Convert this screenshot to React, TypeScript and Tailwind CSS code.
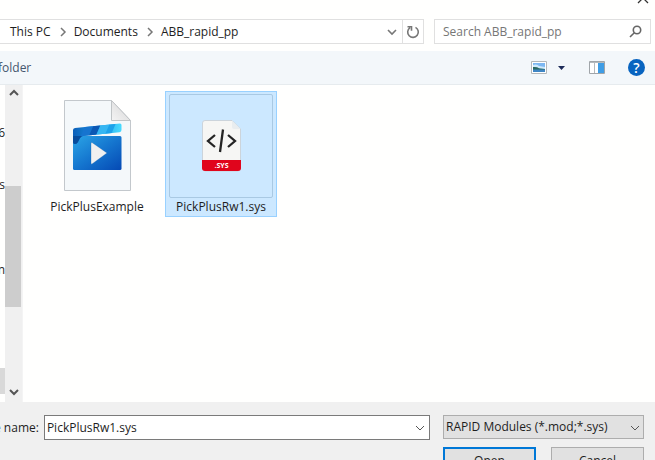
function Chevron({ className }: { className?: string }) {
  return (
    <svg className={className} width="10" height="10" viewBox="0 0 10 10" fill="none" stroke="currentColor" aria-hidden="true">
      <path d="M1 3 5 7 9 3" />
    </svg>
  );
}

function VideoIcon() {
  return (
    <svg width="67" height="92" viewBox="0 0 67 92" aria-hidden="true">
      <defs>
        <linearGradient id="board" x1="0" y1="0" x2="1" y2="1">
          <stop offset="0" stopColor="#2ba5e6" />
          <stop offset="0.5" stopColor="#1576cf" />
          <stop offset="1" stopColor="#0549b4" />
        </linearGradient>
        <linearGradient id="clap" x1="0" y1="0" x2="1" y2="0">
          <stop offset="0" stopColor="#0a5cb6" />
          <stop offset="0.5" stopColor="#1c98e4" />
          <stop offset="1" stopColor="#48dcff" />
        </linearGradient>
        <linearGradient id="fold" x1="0" y1="1" x2="1" y2="0">
          <stop offset="0" stopColor="#f4f4f4" />
          <stop offset="1" stopColor="#d4d4d4" />
        </linearGradient>
        <clipPath id="clapShape">
          <path d="M9 30q0-1.700 2-2l45-4.500q1.500 0 1.500 1.500v5q0 2-2 2.200L19 36q-2 .3-3 2l-2 4q-1 2-3 2-2 0-2-2z" />
        </clipPath>
      </defs>
      <path d="M.5.5h47l19 20v70H.5z" fill="#f4f8fa" stroke="#c3c8cc" />
      <path d="M47.500.5v20h19z" fill="url(#fold)" stroke="#c0c4c6" />
      <path d="M9 38 18 36h38q1.500 0 1.500 1.500v31q0 1.500-1.500 1.500H10.500Q9 70 9 68.500z" fill="url(#board)" />
      <g clipPath="url(#clapShape)">
        <path d="M8 22h50v24H8z" fill="url(#clap)" />
        <path d="M22 24h8l-6 14h-8z" fill="#1674cf" />
        <path d="M30 24h7l-6 14h-7z" fill="#0b58b4" />
        <path d="M37 24h9l-6 14h-9z" fill="#35b6f2" />
        <path d="M46 23h6l-6 14h-6z" fill="#1ca2ea" />
        <path d="M9 36h9l-5 9H9z" fill="#074c9c" />
      </g>
      <path d="M28 42.500 43 53 28 64q-1 .5-1-1v-19.500q0-1.500 1-1z" fill="#f0f0f0" stroke="#0b55a5" strokeOpacity=".4" strokeWidth=".7" />
    </svg>
  );
}

function SysIcon() {
  return (
    <svg width="39" height="52" viewBox="0 0 39 52" aria-hidden="true">
      <path d="M3 .5h27L38.500 9v39q0 3-3 3h-32q-3 0-3-3V3q0-2.500 2.500-2.500z" fill="#f6f6f4" stroke="#c6cdd3" strokeWidth=".8" />
      <path d="M30 .5 38.500 9H32q-2 0-2-2z" fill="#e9edef" />
      <path d="M0 40h39v8q0 3-3 3H3q-3 0-3-3z" fill="#e0051c" />
      <path d="M13 15 6 21l7 6M26 15l7 6-7 6M21 9.500 18 32" fill="none" stroke="#242424" strokeWidth="2.300" />
      <text x="19.500" y="48" textAnchor="middle" fill="#fff" className="text-[7px] font-bold">.SYS</text>
    </svg>
  );
}

function AddressBar() {
  return (
    <div className="flex gap-[10px] pr-1 pb-[7px]">
      <div className="flex h-[25px] min-w-0 flex-1 border border-l-0 border-[#e0e0e0] bg-white">
        <nav className="flex min-w-0 flex-1 items-center" aria-label="Location">
          <Chevron className="-ml-2 mr-2 shrink-0 -rotate-90 stroke-[1.5] text-[#777]" />
          <a href="#pc" className="whitespace-nowrap">This PC</a>
          <Chevron className="mr-[6px] ml-[7px] shrink-0 -rotate-90 stroke-[1.5] text-[#777]" />
          <a href="#documents">Documents</a>
          <Chevron className="mr-[6px] ml-[7px] shrink-0 -rotate-90 stroke-[1.5] text-[#777]" />
          <a href="#rapid">ABB_rapid_pp</a>
        </nav>
        <button className="px-[5px]" aria-label="Previous locations">
          <Chevron className="stroke-[1.6] text-[#777]" />
        </button>
        <button className="border-l border-[#e0e0e0] px-[3px]" aria-label="Refresh">
          <svg width="14" height="14" viewBox="0 0 14 14" fill="none" stroke="#777" strokeWidth="1.6" aria-hidden="true">
            <path d="M9.500 2.400a5.300 5.300 0 1 1-5.500.3M1.500 1.800h4v4" />
          </svg>
        </button>
      </div>
      <div className="flex h-[25px] w-[217px] items-center border border-[#e0e0e0] bg-white pr-2 pl-2">
        <input className="min-w-0 flex-1 outline-none placeholder:text-[#767676]" type="search" aria-label="Search ABB_rapid_pp" placeholder="Search ABB_rapid_pp" />
        <svg width="13" height="13" viewBox="0 0 13 13" fill="none" stroke="#666" strokeWidth="1.600" aria-hidden="true">
          <circle cx="8" cy="5" r="3.700" />
          <path d="M5.300 7.700 1 12" />
        </svg>
      </div>
    </div>
  );
}

function Toolbar() {
  return (
    <div className="flex h-[34px] items-center border-b border-[#e6ebee] bg-[#f3f7fa] pr-[10px] text-[#44566e]">
      <button className="-ml-[2px] mr-auto">folder</button>
      <button className="mr-[11px]" aria-label="Change view">
        <svg width="16" height="13" viewBox="0 0 16 13" aria-hidden="true">
          <path d="M.5.5h15v12H.5z" fill="#fff" stroke="#b4b8ba" />
          <path d="M2 2h12v9H2z" fill="#7db8f2" />
          <path d="M2 4q4-1.500 6 1l6 1v2H2z" fill="#cfeafc" />
          <path d="M2 6q4-.5 6 1.200l6 .8v1H2z" fill="#2b6a62" />
          <path d="M2 8.500h12V11H2z" fill="#3f86c4" />
        </svg>
      </button>
      <button className="mr-6" aria-label="More views">
        <svg width="7" height="4" viewBox="0 0 7 4" aria-hidden="true">
          <path d="M0 0h7L3.500 4z" fill="#1d2b58" />
        </svg>
      </button>
      <button className="mr-[23px]" aria-label="Preview pane">
        <svg width="16" height="13" viewBox="0 0 16 13" aria-hidden="true">
          <path d="M.5.5h15v12H.5z" fill="#fff" stroke="#a0a5a9" />
          <path d="M1 1h14v1H1z" fill="#b5babd" />
          <path d="M5.500 2v10" stroke="#b5babd" />
          <path d="M9 2h6v10H9z" fill="#3f9de5" />
        </svg>
      </button>
      <button className="h-[17px] w-[17px] rounded-full bg-[#0864c0] text-[14px] leading-[17px] font-semibold text-white" aria-label="Help">?</button>
    </div>
  );
}

function Sidebar() {
  return (
    <aside className="flex border-r border-[#f4f4f4]">
      <div className="flex w-[5px] flex-col items-end overflow-hidden pt-[38px] leading-5">
        <span>6</span>
        <span className="mt-8">s</span>
        <span className="mt-[65px]">n</span>
        <span className="mt-auto mb-2 h-[26px] w-full bg-[#d9d9d9]" />
      </div>
      <div className="flex w-[17px] flex-col items-center bg-[#f0f0f0] text-[#555]">
        <button className="py-[3px]" aria-label="Scroll up">
          <Chevron className="rotate-180 stroke-2" />
        </button>
        <div className="flex w-full flex-1 flex-col">
          <div className="flex-[85]" />
          <div className="mr-px flex-[120] bg-[#cdcdcd]" />
          <div className="flex-[79]" />
        </div>
        <button className="pt-px pb-[5px]" aria-label="Scroll down">
          <Chevron className="stroke-2" />
        </button>
      </div>
    </aside>
  );
}

function Files() {
  return (
    <main className="flex flex-1 items-start gap-3 bg-[#fffffe] pt-[6px] pl-[18px]">
      <button className="flex w-28 flex-col items-center border border-transparent pt-[2px]">
        <span className="flex h-[104px] items-center justify-center">
          <VideoIcon />
        </span>
        <span className="pb-px leading-[17px]">PickPlusExample</span>
      </button>
      <button className="flex w-28 flex-col items-center border border-[#99d1ff] bg-[#cce8ff] pt-[2px]">
        <span className="flex h-[104px] w-[104px] items-center justify-center rounded-[2px] border border-[#a9c9e3]">
          <SysIcon />
        </span>
        <span className="pb-px leading-[17px]">PickPlusRw1.sys</span>
      </button>
    </main>
  );
}

function Footer() {
  return (
    <footer className="h-[58px] shrink-0 overflow-hidden bg-[#f0f0f0] pt-[13px] pr-[11px]">
      <div className="flex h-[25px]">
        <label htmlFor="file" className="-ml-[6px] mr-[5px] leading-[25px] whitespace-nowrap">e name:</label>
        <div className="flex min-w-0 flex-1 items-center border border-[#7a7a7a] bg-white pr-1">
          <input id="file" className="min-w-0 flex-1 pl-[2px] outline-none" defaultValue="PickPlusRw1.sys" />
          <button aria-label="Recent file names">
            <Chevron className="text-[#555]" />
          </button>
        </div>
        <div className="relative ml-[13px] w-[201px]">
          <select className="h-6 w-full appearance-none border border-[#adadad] bg-[#e1e1e1] pl-[2px]" aria-label="File type">
            <option>RAPID Modules (*.mod;*.sys)</option>
          </select>
          <Chevron className="pointer-events-none absolute top-2 right-1 text-[#555]" />
        </div>
      </div>
      <div className="mt-[7px] flex justify-end gap-[15px]">
        <button className="h-[27px] w-[93px] border-2 border-[#0078d7] bg-[#e1e1e1]">Open</button>
        <button className="h-[27px] w-[93px] border border-[#adadad] bg-[#e1e1e1]">Cancel</button>
      </div>
    </footer>
  );
}

export default function App() {
  return (
    <div className="flex h-screen flex-col overflow-hidden bg-[#fffffe] font-['Open_Sans','Noto_Sans',sans-serif] text-[12px] leading-[18px] text-[#1e1e1e]">
      <div className="flex h-[19px] items-start justify-end pr-[6px]">
        <button className="-mt-2" aria-label="Close">
          <svg width="12" height="12" viewBox="0 0 12 12" fill="none" stroke="#333" strokeWidth="1.300" aria-hidden="true">
            <path d="m1 1 10 10M11 1 1 11" />
          </svg>
        </button>
      </div>
      <AddressBar />
      <Toolbar />
      <div className="flex min-h-0 flex-1">
        <Sidebar />
        <Files />
      </div>
      <Footer />
    </div>
  );
}
